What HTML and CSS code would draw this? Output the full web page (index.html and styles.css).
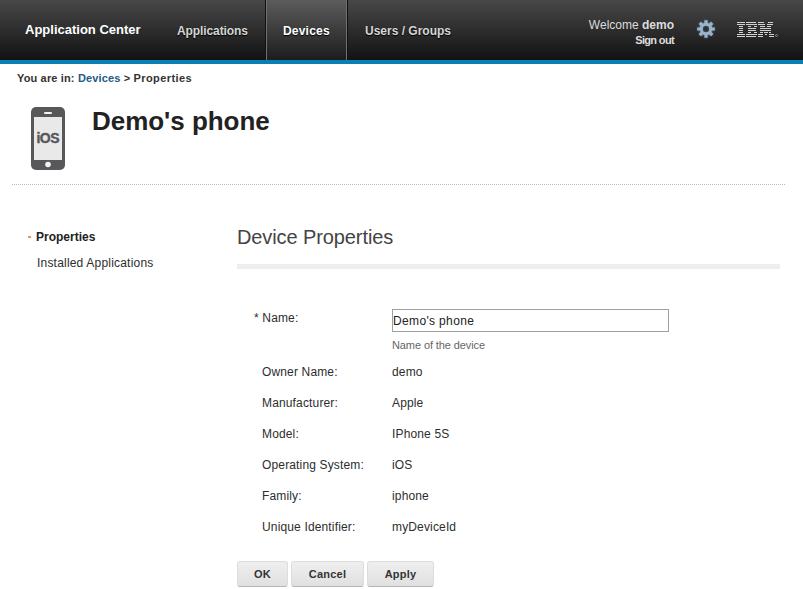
FILE: index.html
```html
<!DOCTYPE html>
<html lang="en">
<head>
<meta charset="utf-8">
<title>Application Center</title>
<link rel="stylesheet" href="styles.css">
</head>
<body>
<header class="banner">
  <div class="brand">Application Center</div>
  <nav class="tabs">
    <a class="tab apps">Applications</a>
    <a class="tab active">Devices</a>
    <a class="tab users">Users / Groups</a>
  </nav>
  <div class="account">
    <div class="welcome">Welcome <b>demo</b></div>
    <div class="signout">Sign out</div>
  </div>
  <svg class="gear" width="22" height="22" viewBox="-11 -11 22 22">
    <g stroke="#a0b2c4" stroke-width="3.2">
      <path d="M0-8.8V-5M0 8.8V5M-8.8 0H-5M8.8 0H5M-6.2-6.2L-4-4M6.2 6.2L4 4M-6.2 6.2L-4 4M6.2-6.2L4-4"/>
      <circle r="4.7" fill="none" stroke-width="3"/>
    </g>
  </svg>
  <svg class="ibm" width="42" height="17" viewBox="0 0 42 17">
    <path stroke="#d2d2d2" stroke-width="1.1" fill="none" d="M0 .5H8M9 .5H19M21 .5H27M31 .5H36M0 2.5H8M9 2.5H20M21 2.5H28M30 2.5H36M2 4.5H6M11 4.5H14M17 4.5H20M23 4.5H28M30 4.5H34M2 6.5H6M11 6.5H19M23 6.5H34M2 8.5H6M11 8.5H19M23 8.5H34M2 10.5H6M11 10.5H14M17 10.5H20M23 10.5H26M27 10.5H31M32 10.5H34M0 12.5H8M9 12.5H20M21 12.5H26M28 12.5H30M32 12.5H37M0 14.5H8M9 14.5H19M21 14.5H26M32 14.5H37"/>
    <circle cx="39.5" cy="13.5" r="1" fill="none" stroke="#aaa" stroke-width=".7"/>
  </svg>
</header>
<div class="crumbs">You are in: <a>Devices</a> &gt; <span>Properties</span></div>
<div class="heading">
  <svg class="phone" width="34" height="63" viewBox="0 0 34 63">
    <rect width="34" height="63" rx="5" fill="#58585a"/>
    <rect x="3" y="10" width="28" height="43" fill="#e9e9ea"/>
    <rect x="13" y="5" width="8" height="2" rx="1" fill="#f4f4f4"/>
    <circle cx="17" cy="57.5" r="2.8" fill="#f4f4f4"/>
    <text x="17" y="36" text-anchor="middle" textLength="23" class="os">iOS</text>
  </svg>
  <h1>Demo's phone</h1>
</div>
<main class="columns">
  <nav class="side">
    <a class="current">Properties</a>
    <a>Installed Applications</a>
  </nav>
  <section class="content">
    <h2>Device Properties</h2>
    <div class="form">
      <label class="name"><i>*</i> Name:</label>
      <div class="field"><input value="Demo's phone"><small>Name of the device</small></div>
      <span>Owner Name:</span><span>demo</span>
      <span>Manufacturer:</span><span>Apple</span>
      <span>Model:</span><span>IPhone 5S</span>
      <span>Operating System:</span><span>iOS</span>
      <span>Family:</span><span>iphone</span>
      <span>Unique Identifier:</span><span>myDeviceId</span>
    </div>
    <div class="buttons"><button class="ok">OK</button><button class="cancel">Cancel</button><button class="apply">Apply</button></div>
  </section>
</main>
</body>
</html>
```
FILE: styles.css
```css
* { box-sizing: border-box; }
html { overflow: hidden; }
body { margin: 0; background: #fff; color: #2d2d2d; font: 12px/16px "Liberation Sans", Arial, sans-serif; }
.banner { display: flex; height: 64px; border-bottom: 4px solid #0b7eb5; background: linear-gradient(#484848, #121212 60px); color: #ddd; }
.brand { width: 161px; padding: 22px 0 0 25px; font-size: 13px; font-weight: bold; color: #fff; white-space: nowrap; }
.tabs { display: flex; }
.tab { padding-top: 23px; font-weight: bold; color: #d6d6d6; white-space: nowrap; text-shadow: 0 1px 1px #000; }
.apps { width: 105px; padding-left: 16px; letter-spacing: -.1px; }
.active { width: 81px; padding-left: 16px; border: solid #707070; border-width: 0 1px; background: linear-gradient(#5c5c5c, #1c1c1c); color: #fff; letter-spacing: .2px; box-shadow: -1px 0 #111, 1px 0 #111; }
.users { padding-left: 18px; }
.account { margin-left: auto; padding-top: 17px; text-align: right; }
.signout { margin-top: -1px; font-size: 11px; font-weight: bold; letter-spacing: -.65px; }
.gear { margin: 18px 20px 0 21px; filter: drop-shadow(0 0 1px #3474a0); }
.ibm { margin: 22px 24px 0 0; }
.crumbs { height: 30px; padding: 6px 17px 0; font-size: 11px; font-weight: bold; letter-spacing: .15px; color: #333; }
.crumbs a { color: #215b83; }
.crumbs span { letter-spacing: .4px; }
.heading { display: flex; height: 91px; margin: 0 18px 0 12px; padding: 13px 0 0 19px; border-bottom: 1px dotted #bbb; }
.os { font: bold 14px "Liberation Sans", Arial, sans-serif; fill: #58585a; stroke: #58585a; stroke-width: .4px; }
h1 { margin: -1px 0 0 27px; font-size: 26px; line-height: 30px; letter-spacing: -.03px; color: #222; }
.columns { display: grid; grid-template-columns: 237px 543px; }
.side { display: flex; flex-direction: column; gap: 10px; padding: 44px 0 0 37px; letter-spacing: .2px; }
.current { margin-left: -10px; font-weight: bold; letter-spacing: 0; color: #222; }
.current::before { content: ""; display: inline-block; width: 3px; height: 2px; margin: 0 5px 3px 1px; background: #e5975c; }
h2 { height: 84px; margin: 0; padding-top: 40px; border-bottom: 5px solid #eee; font-size: 20px; line-height: 24px; font-weight: normal; color: #444; letter-spacing: -.1px; }
.form { display: grid; grid-template-columns: 130px 277px; grid-template-rows: 40px repeat(6, 15px); row-gap: 16px; padding: 40px 0 0 25px; line-height: 15px; letter-spacing: .15px; }
.name { margin: 2px 0 0 -8px; }
.name i { font-style: normal; }
.field { display: flex; flex-direction: column; }
input { flex: none; width: 277px; height: 23px; padding: 0; border: 1px solid #a0a0a0; font: 12px "Liberation Sans", Arial, sans-serif; letter-spacing: .35px; color: #222; }
small { margin-top: 6px; font-size: 11px; letter-spacing: -.1px; color: #666; }
.buttons { display: flex; gap: 3px; margin-top: 26px; }
button { height: 26px; padding: 0 0 1px; border: 1px solid #ddd; border-bottom-color: #b5b5b5; border-radius: 3px; background: linear-gradient(#efefef, #e0e0e0); font: bold 11px "Liberation Sans", Arial, sans-serif; letter-spacing: .2px; color: #333; }
.ok { width: 51px; }
.cancel { width: 73px; }
.apply { width: 67px; }
```
